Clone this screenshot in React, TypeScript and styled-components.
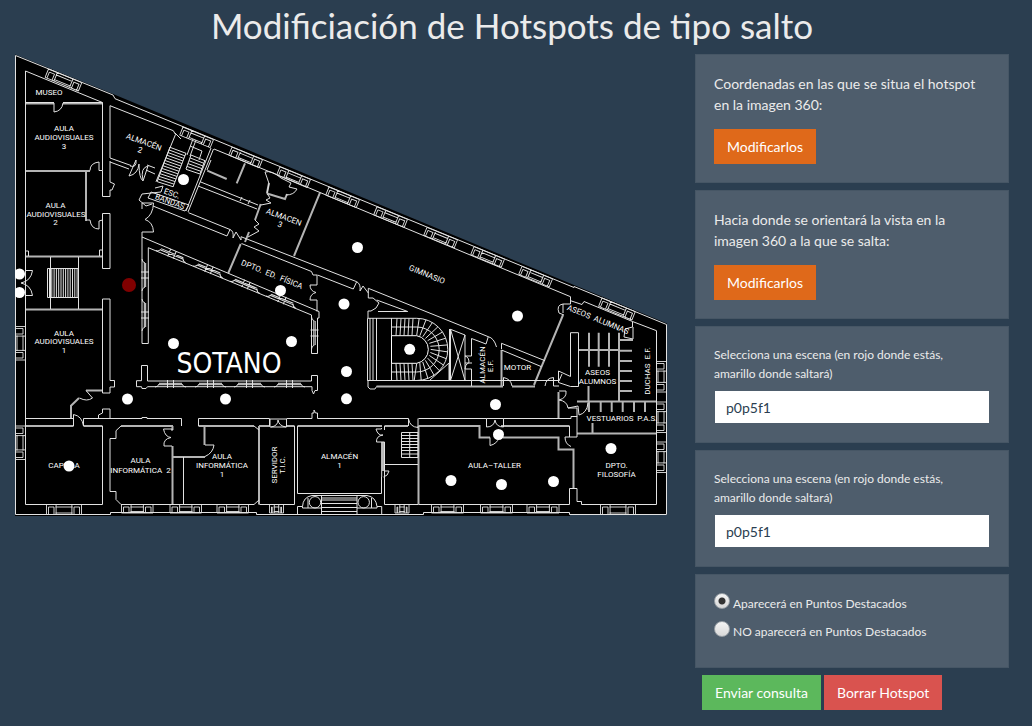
import React, { useState } from 'react';
import styled, { createGlobalStyle } from 'styled-components';

const GlobalStyle = createGlobalStyle`
  *, *::before, *::after { box-sizing: border-box; }
  body {
    margin: 0;
    background: #2b3e50;
    color: #ebebeb;
    font-family: Lato, "Liberation Sans", sans-serif;
    font-size: 14px;
    line-height: 21px;
  }
`;

const Page = styled.div`
  padding: 4px 23px 16px 15px;
`;

const Title = styled.h1`
  margin: 0 0 8px;
  font-size: 35px;
  font-weight: 400;
  line-height: 42px;
  text-align: center;
`;

const Columns = styled.main`
  display: grid;
  grid-template-columns: minmax(0, 653fr) minmax(0, 314fr);
  gap: 27px;
  align-items: start;
`;

const MapSvg = styled.svg`
  display: block;
  width: 100%;
  height: auto;
`;

const Form = styled.form`
  display: flex;
  flex-direction: column;
  gap: 7px;
`;

const Card = styled.section`
  padding: 18px;
  background: #4e5d6c;
  border: 1px solid #465665;
`;

const CardText = styled.p`
  margin: 0 0 14px;
`;

const Button = styled.button<{ $color: string }>`
  padding: 7px 13px;
  border: 0;
  background: ${(p) => p.$color};
  color: #fff;
  font: inherit;
  cursor: pointer;
`;

const FieldLabel = styled.label`
  display: block;
  margin-bottom: 7px;
  font-size: 12px;
  line-height: 19px;
`;

const Select = styled.select`
  display: block;
  width: 100%;
  height: 34px;
  padding: 0 11px;
  appearance: none;
  border: 1px solid #4e5d6c;
  border-radius: 0;
  background: #fff;
  color: #2b3e50;
  font: inherit;
`;

const RadioRow = styled.label`
  display: flex;
  align-items: flex-start;
  gap: 3px;
  height: 28px;
  font-size: 12px;
`;

const Radio = styled.input`
  appearance: none;
  width: 16px;
  height: 16px;
  margin: 0;
  border: 1px solid #9aa1a7;
  border-radius: 50%;
  background: linear-gradient(#f4f4f4, #d8d8d8);
  &:checked {
    background: radial-gradient(circle, #333 3px, transparent 4px), linear-gradient(#f4f4f4, #d8d8d8);
  }
`;

const Actions = styled.div`
  display: flex;
  gap: 3px;
  padding-left: 7px;
`;

const SLOPE = 22.35;

/* Window set in a wall: two panes at the ends and a sill between them. */
function WallWindow({ x, y, len, depth, angle = 0 }: { x: number; y: number; len: number; depth: number; angle?: number }) {
  const pane = Math.min(9, len * 0.3);
  return (
    <g transform={`translate(${x} ${y}) rotate(${angle})`} strokeWidth="0.9">
      <path
        d={`M0 0V${depth}M${len} 0V${depth}M0 0H${len}M0 ${depth}H${len}
        M2 2.5H${pane - 1.5}V${depth}M2 2.5V${depth}M${len - 2} ${depth}V2.5H${len - pane + 1.5}V${depth}
        M${pane + 0.6} 0V${depth}M${len - pane - 0.6} 0V${depth}
        M${pane} 2.5H${len - pane}M${pane} ${depth - 1.5}H${len - pane}`}
      />
    </g>
  );
}

/* Courtyard window: crossed mullions between two rounded jambs. */
function CourtWindow({ x, y, len, angle = 0 }: { x: number; y: number; len: number; angle?: number }) {
  const a = len / 2;
  return (
    <g transform={`translate(${x} ${y}) rotate(${angle})`} strokeWidth="1">
      <path
        d={`M0 2.3H${len}M0 3.7H${len}M${a - 3} -1V7M${a + 3} -1V7
        M0 3Q-1 6-4 6M${len} 3Q${len + 1} 6 ${len + 4} 6`}
      />
    </g>
  );
}

const slopeWindows = [183, 232, 280, 329, 377, 427, 474, 522];
const bottomWindows: [number, number, number][] = [
  [46.5, 35, 10], [121.5, 31.5, 8.5], [170, 31.5, 8.5], [217, 31.5, 8.5], [269.5, 14, 8.5],
  [395, 14, 8.5], [431.5, 32, 8.5], [480.5, 32, 8.5], [527, 32, 8.5], [600.5, 35, 10],
];

const thinWalls = [
  // outer contour
  'M15.5 55.5L113 95L115 98.7L574 287.5V286.5L666.5 324.5V514.5H569.5V512.5H423.5V514.5H256.5V512.5H110.5V514.5H15.5Z',
  // museum and left wing
  'M25.5 71L102.5 102.5V170.5M25.5 71V504.5M25.5 102.5H54M63 102.5H102.5M54 103V112Q62 111 63 103',
  'M110 158V105.7L173.3 130.7L175.5 134.5L156 181.7M110 161V182L114.5 184L112 190H110V196.5H102.5V170.5',
  'M90 170.5Q90 163 99 162V170.5H102.5M86.5 220H90Q91 229 99 229V221L102.5 220M102.5 213.5H110V268.5H102.5V213.5M102.5 250H99.500V256M25.500 251H28.500V256',
  'M50.500 257V309M78.500 257V309M102.500 299H110V380.500H114.500V387H110V393H102.500V299',
  'M25.500 418.500H73.500V426M83.500 426V418.500H142V417.500H147V418.500H181.500V426M198.500 426V418.500H269.500V426',
  'M73.500 424V414.500Q82 416 83.500 426M98.500 418.500V415L102.500 413V409H110V418.500',
  'M86 390.500L92.500 398Q87 402 79.500 398',
  'M102.500 426V504.500H25.500M121 426L116 430.700V438.500H110V491.500H116V499.500L121 504.500H254L259 500',
  'M183.500 457V504M163.500 429H172V431M163.500 429Q165 437 171 437.500Q163 439 164 446H172M205 445H214Q213 453 205 456.500M254 426L259 430',
  // entrance side
  'M259.500 504.500H294.500V426M270 419H286.500V427H270ZM271 427Q278 426 278 420Q279 426 286 427',
  'M286.500 418.500H312V413H314V410L315.500 413H317.500V418.500H408.500V426M297.500 426V493.500H381.500V477M381.700 442V477M384.500 426V430M376 429H381.500V428M376 429Q378 436 383 435Q376 436 376.500 442H384.500V504.500H418.500',
  'M384 471H389Q388 476 383.500 477M384.500 464.500H418M408.500 419Q410 427 418 427.500V418.500',
  'M297.500 514V506.500H302.500Q303 497 312 495.500H367Q376 497 377 506.500H381.700V514M302.500 506.500V508H321.500V495.500M357 495.500V508H377V506.500M308 508V498M371.500 508V498M321.500 508V514M357 508V514',
  'M321.500 498H357M321.500 500H357M321.500 503.500H357M321.500 507.500H357M321.500 511.500H357',
  'M401.500 432.500H418V457.500H401.500ZM409.700 432.500V457.500M401.500 435.500H418M401.500 438.500H418M401.500 441.500H418M401.500 444.500H418M401.500 447.500H418M401.500 450.500H418M401.500 454H418',
  // workshop
  'M418.500 418.500H486.500V427Q494 427 495 420Q496 427 503.500 427V418.500H571V416.500H577V437H565Q565 444 571 446.500M486.500 418.500H503.500M418.500 504.500H569.500V488.500H577V501.500H581.500V504.500H656.500V330.700L632.500 321.500M569.500 426V437',
  'M490 437.500V445.500Q497 444 499 437.500',
  // sloped wall and gym
  'M214 149L302 185L570.500 296.700V304H563V313M563 304Q556 305 559 313L564 315M570.500 300.700L582 304.500L584 301.500L632.500 321.500V327L625 329L624 337L633 339V327',
  'M188.500 212.700L230 229.500L227 236L153 206M230 229.500Q234 231 233 238L236 232L241 240V236.700L356.700 281.700L353.300 289L317.500 275M241.500 243.500L311.500 271.500L313 275H317V285H310Q310 291 316 292.500Q310 294 310 300H317V311.500',
  'M356.700 281.700Q361 284 360 291L363 286L368.300 293V288.300L488.300 336.700L486 344L471.500 338.500V356H465M488.300 336.700Q494 338 496.500 347M501.500 349V343.300L545 360.700M501.500 350L541.500 366.700',
  'M465 356Q469 357 469 362.500Q465 364 465 369H471.500V386M465 363H472M376.700 300L407.700 311.500H378M368.300 293V298H373L379 303Q377 309 371 311H368V318',
  // toilets by the ramp
  'M213.500 149L188 212M211 148L186 211M200 181.700L258 205M198 186L257 209M242 197L240 201M250 200L248 204M207 170L211 160',
  'M265 172L269 183.500L267 193.500L270 198L266 200L271 203L261 205M265 172Q272 170 281 178L291 183L289 187L297 189Q294 195 286 195',
  'M255 220L259 224L254 227L259 231L248 237M155 188L163 186L161 192L142 194L139 200L146 206L152 204M142 209V203H153.500Q153 215 145 219.500Q153 222 153.500 232H142',
  'M151 192L189 205L185 211L148 198ZM130 166Q137 168 136 160L129 176Q138 174 139 164Q139 178 143 181L148 166Q140 168 143 180M147 165L155 168M146 170L155 174M110 158L131 165.500M110 162L129 169',
  'M175 133L181 139M193 139L187 155M196 140L190 156M190 146L202 151L199 160',
  // courtyard
  'M142 232V237L319 311.500V318H317.500V353.500H311.500V315L148.300 247.700V343.500H142V237',
  'M141.500 365.500H147.500V381H311.500V375.500H317.500V390.500H315L313.500 394L312 390.500V386.700H147.500L146 388.500H142L141.500 386.700H136.500V380.700H141.500Z',
  // spiral stair block
  'M367.500 318.300H416.700A31 31 0 0 1 416.700 380.500H367.500ZM370 318V380M373 318V380M376.500 318V380M391.500 318V380M367.500 380.500H558M368 380.500V387L370 389H375L376.500 386.500M449.500 329V380M450.500 329.300L465 335V380.500H450.500ZM450.500 329.300L465 380.500M465 335L450.500 380.500M430 380L449 363V380',
  // boiler and changing rooms
  'M503.500 386V377.500Q511 379 512 386M545 386Q546 378 553.500 377.500V386H559M558.500 371L570.500 376.500V332.700H578.500V386.500H570.500L558.500 382.500ZM562 374L559 381',
  'M559 391H566Q567 398 559 400Q567 401 568 408H577V417M568 408L578 406L579 415Q587 413 588 403',
];

const thickWalls = [
  'M25.500 103.500H54M63 103.500H102M25.500 171H90M86 171V221M25.500 256.500H102.500M25.500 309.500H102.500',
  'M102.500 390.500H86M79 398L71 405.700V418.500M25.500 426H73.500M83.500 426H102.500M121 426H173M172.500 446V504M172.500 426V430M172.500 457H205M204.500 426V445M198.500 426H254M259 426V504.500M259 426H270M286.500 426H294.500M297.500 426H382M383 442V471M384.500 426H408M418.500 426V504',
  'M418.500 426H479.500V437.500H490M503 437.500H558.500V449.500H573.500V488M501 426H569.500M577 433.500H656M558.500 392V418',
  'M376.500 386.500H503M512 386.500H535M501.500 350V386M541.500 366.700L534 385M563 315L541.500 366.700M320 192.700L294 256M260.700 204L255 220M249 232L245 242M240.700 244L228.300 273M267 193.500L285 199L287 194M269 183L267 193',
  'M207.300 170.700L226.700 179M245 163.300L236.700 183.300M578.500 350H619M619 332.700V401M577 401.500H656M588.500 386V410',
  'M589 332.700V366.700M598.700 332.700V366.700M609 332.700V366.700M619 340H633M619 350.700H632M619 361H632M619 371H632M619 381H632M619 391H632',
  'M589 401V412M600.700 401V412M611.700 401V412M622.700 401V412M634 401V412M645 401V412M592.500 423V433',
];

/* Treads of the spiral stair, turning round its centre. */
const treads = Array.from({ length: 15 }, (_, i) => {
  const a = ((-90 + (i * 180) / 14) * Math.PI) / 180;
  const b = a + 0.08;
  return `M${416.7 + 14 * Math.cos(a)} ${349.4 + 14 * Math.sin(a)}L${416.7 + 31 * Math.cos(b)} ${349.4 + 31 * Math.sin(b)}`;
}).join('');
const straightTreads = [396, 400, 404, 408, 412]
  .map((x) => `M${x} 335.500L${x + 1} 318.500M${x} 363.500L${x + 1} 380.500`)
  .join('');
const mainStair = Array.from({ length: 14 }, (_, i) => {
  const t = i / 13;
  return `M${170 - 12.7 * t} ${147.3 + 34.4 * t}L${186 - 13 * t} ${153.3 + 33.4 * t}`;
}).join('');
const sideStair = Array.from({ length: 6 }, (_, i) => {
  const t = i / 5;
  return `M${191 - 5 * t} ${155 + 14.3 * t}L${205 - 5 * t} ${160.7 + 13.3 * t}`;
}).join('');
const hallStair = Array.from({ length: 13 }, (_, i) => `M${49.5 + i * 2.3} 268.500V297.500`).join('');

const roomNames: [string, number, number, number?][] = [
  ['MUSEO', 49, 95],
  ['AULA', 64, 131], ['AUDIOVISUALES', 64, 140], ['3', 64, 149],
  ['AULA', 55.5, 207.5], ['AUDIOVISUALES', 56, 216.5], ['2', 55.5, 225],
  ['AULA', 64, 335.5], ['AUDIOVISUALES', 64, 344], ['1', 64, 353],
  ['ALMACÉN', 143, 144.5, 20], ['2', 139, 152.5, 20],
  ['ESC.', 171, 196, 20], ['BANDAS', 169, 204, 20],
  ['ALMACEN', 283, 219.5, 20], ['3', 279, 227, 20],
  ['GIMNASIO', 426, 277, 22],
  ['DPTO.\u00a0 ED.\u00a0 FÍSICA', 271, 277, 22],
  ['ASEOS\u00a0 ALUMNAS', 597, 322, 22],
  ['MOTOR', 517.5, 369.5],
  ['ASEOS', 597.5, 375], ['ALUMNOS', 597.5, 383.5],
  ['VESTUARIOS\u00a0 P.A.S.', 622, 420.5],
  ['ALMACÉN', 484.5, 365, -90], ['E.F.', 493, 366, -90],
  ['DUCHAS\u00a0 E.F.', 650, 371, -90],
  ['CAPILLA', 64, 468],
  ['AULA', 140.5, 463], ['INFORMÁTICA\u00a0 2', 140.5, 472.5],
  ['AULA', 222, 459], ['INFORMÁTICA', 222, 468], ['1', 222, 477],
  ['SERVIDOR', 276.5, 465, -90], ['T.I.C.', 285, 465, -90],
  ['ALMACÉN', 339.5, 459], ['1', 339.5, 467.5],
  ['AULA–TALLER', 494.5, 468],
  ['DPTO.', 616.5, 467.5], ['FILOSOFÍA', 616.5, 477],
];

const spots: [number, number][] = [
  [183.5, 179.5], [357.5, 247.5], [280.5, 290.5], [344, 304], [19.5, 274], [19.5, 292.5], [173.5, 343.5],
  [291.5, 341.5], [517.5, 316], [409.7, 349.3], [346.5, 371.5], [127.5, 399], [225.5, 399], [346.5, 398.8],
  [495.5, 404.5], [498.5, 434.5], [611, 448.5], [451, 480.5], [501.5, 484.5], [553.5, 481.5], [69, 466],
];

function FloorPlan() {
  return (
    <MapSvg viewBox="15 54 653 463" role="img" aria-label="Plano del sótano">
      <path d="M15 54.500L113 94L574 285L667 323.500V515H570V516H15Z" fill="#000" />
      <g fill="none" stroke="#b4b4b4" strokeWidth="2">
        {thickWalls.map((d) => <path key={d} d={d} />)}
      </g>
      <g fill="none" stroke="#e2e2e2" strokeWidth="1">
        {thinWalls.map((d) => <path key={d} d={d} />)}
        <path d={`M47.500 268.500H78.500V297.500H47.500Z${hallStair}`} />
        <path d={`${mainStair}M170 147L157 182M186 153L173 187`} />
        <path d={`${sideStair}M191 155L186 169M205 160L200 174`} />
        <path d={`${treads}${straightTreads}M391.500 327H416.700A22.500 22.500 0 0 1 416.700 372H391.500`} />
        <path d="M391.500 335.700H416.700A14 14 0 0 1 416.700 363.300H391.500Z" fill="#000" stroke="#fff" />
        <circle cx="315" cy="502.300" r="5.700" />
        <circle cx="363.700" cy="502.300" r="5.700" />
        <path d="M25.500 270.500H32.500Q31 281 21 283Q31 285 32.500 295.500H25.500" />
        {slopeWindows.map((x) => (
          <WallWindow key={x} x={x} y={134 + (x - 200) * 0.411} len={33} depth={8.7} angle={SLOPE} />
        ))}
        <WallWindow x={48.5} y={69} len={36} depth={9} angle={SLOPE} />
        <WallWindow x={602} y={298} len={36} depth={9} angle={SLOPE} />
        {bottomWindows.map(([x, len, depth]) => (
          <WallWindow key={x} x={x} y={504.5} len={len} depth={depth} />
        ))}
        {[326.5, 426].map((y) => <WallWindow key={y} x={25.5} y={y} len={33.5} depth={10} angle={90} />)}
        {[361.5, 402, 442].map((y) => <WallWindow key={y} x={666.5} y={y} len={30.5} depth={10} angle={90} />)}
        {[162, 199, 236, 272].map((x) => (
          <CourtWindow key={x} x={x} y={246.5 + (x - 162) * 0.414} len={24} angle={SLOPE} />
        ))}
        {[159, 199, 238, 278].map((x) => <CourtWindow key={x} x={x} y={381} len={23} />)}
        {[263, 303].map((y) => <CourtWindow key={y} x={148} y={y} len={24} angle={90} />)}
        <CourtWindow x={317.5} y={321} len={24} angle={90} />
      </g>
      <g fill="#fff" fontFamily='Roboto, "Liberation Sans", sans-serif' fontSize="8" textAnchor="middle">
        {roomNames.map(([name, x, y, angle]) => (
          <text key={`${name}${x}${y}`} x={x} y={y} transform={angle ? `rotate(${angle} ${x} ${y})` : undefined}>
            {name}
          </text>
        ))}
      </g>
      <text x="229" y="373" fill="#fff" fontFamily='"DejaVu Sans Condensed", "DejaVu Sans", sans-serif' fontSize="28" textAnchor="middle">
        SOTANO
      </text>
      <g fill="#fff">
        {spots.map(([x, y]) => <circle key={`${x}-${y}`} cx={x} cy={y} r="5.500" />)}
      </g>
      <circle cx="129" cy="285" r="7" fill="#800000" />
    </MapSvg>
  );
}

function SceneField({ id }: { id: string }) {
  return (
    <Card>
      <FieldLabel htmlFor={id}>
        Selecciona una escena (en rojo donde estás,
        <br />
        amarillo donde saltará)
      </FieldLabel>
      <Select id={id} defaultValue="p0p5f1">
        <option value="p0p5f1">p0p5f1</option>
      </Select>
    </Card>
  );
}

export default function App() {
  const [featured, setFeatured] = useState(true);
  return (
    <Page>
      <GlobalStyle />
      <Title>Modificiación de Hotspots de tipo salto</Title>
      <Columns>
        <FloorPlan />
        <Form onSubmit={(e) => e.preventDefault()}>
          <Card>
            <CardText>Coordenadas en las que se situa el hotspot en la imagen 360:</CardText>
            <Button type="button" $color="#df691a">Modificarlos</Button>
          </Card>
          <Card>
            <CardText>Hacia donde se orientará la vista en la imagen 360 a la que se salta:</CardText>
            <Button type="button" $color="#df691a">Modificarlos</Button>
          </Card>
          <SceneField id="escena-origen" />
          <SceneField id="escena-destino" />
          <Card>
            <RadioRow>
              <Radio type="radio" name="destacado" checked={featured} onChange={() => setFeatured(true)} />
              Aparecerá en Puntos Destacados
            </RadioRow>
            <RadioRow>
              <Radio type="radio" name="destacado" checked={!featured} onChange={() => setFeatured(false)} />
              NO aparecerá en Puntos Destacados
            </RadioRow>
          </Card>
          <Actions>
            <Button type="submit" $color="#5cb85c">Enviar consulta</Button>
            <Button type="button" $color="#d9534f">Borrar Hotspot</Button>
          </Actions>
        </Form>
      </Columns>
    </Page>
  );
}
